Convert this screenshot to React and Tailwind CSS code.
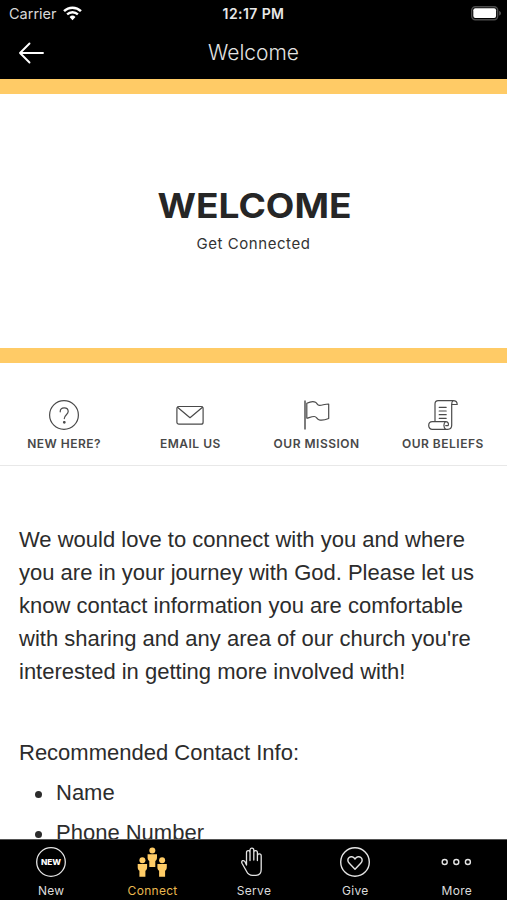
import React from "react";

const WifiIcon = () => (
  <svg width="19" height="15" viewBox="0 0 18 14" fill="none" stroke="white">
    <path d="M1 4.800a11.400 11.400 0 0 1 16 0" strokeWidth="2.400" />
    <path d="M3.900 7.900a7.300 7.300 0 0 1 10.200 0" strokeWidth="2.200" />
    <path d="M6.200 10.200a4 4 0 0 1 5.600 0L9 13.300z" fill="white" stroke="none" />
  </svg>
);

const BatteryIcon = () => (
  <svg width="31" height="15" viewBox="0 0 31 15">
    <rect x="0.7" y="0.7" width="26" height="13" rx="3.600" fill="none" stroke="#4c4c4c" strokeWidth="1.400" />
    <rect x="2.300" y="2.300" width="22.800" height="9.800" rx="2" fill="white" />
    <path d="M28.200 5v4.600c1-.4 1.700-1.200 1.700-2.300S29.200 5.400 28.200 5z" fill="#5c5c5c" />
  </svg>
);

const BackIcon = () => (
  <svg width="26" height="22" viewBox="0 0 26 22" fill="none" stroke="white" strokeWidth="1.900" strokeLinecap="round" strokeLinejoin="round">
    <path d="M11.500 1.500L2 11L11.500 20.500M2 11H25" />
  </svg>
);

const lineProps = {
  width: 32,
  height: 32,
  viewBox: "0 0 32 32",
  fill: "none",
  strokeLinecap: "round",
  strokeLinejoin: "round",
};

const QuestionIcon = () => (
  <svg {...lineProps} stroke="#4a4a4a" strokeWidth="1.200">
    <circle cx="16" cy="16" r="14.400" />
    <path d="M12.200 12.800c0-2.200 1.600-3.900 4-3.900s4 1.600 4 3.700c0 3-3.900 3.400-3.900 7" />
    <circle cx="16.300" cy="23.300" r="0.800" fill="#4a4a4a" />
  </svg>
);

const MailIcon = () => (
  <svg {...lineProps} stroke="#4a4a4a" strokeWidth="1.200">
    <rect x="2.900" y="7.500" width="26.200" height="17.700" rx="2" />
    <path d="M3.500 8.200L16 18.700L28.500 8.200" />
  </svg>
);

const FlagIcon = () => (
  <svg {...lineProps} stroke="#4a4a4a" strokeWidth="1.200">
    <path d="M4 1.600V30.400" stroke="#777" strokeWidth="1.900" strokeLinecap="butt" />
    <path d="M5.800 4.200C8.800 2.800 12 1.900 14.500 3.200C16.500 4.400 16 6.300 18.500 6.300C21.500 6.300 23.500 5 27.700 5V19.500C24 21 20 21.600 17.800 20.700C15.300 19.800 15.800 17.500 13.200 17.500C10.500 17.500 8 18.700 5.800 19.200z" />
  </svg>
);

const ScrollIcon = () => (
  <svg {...lineProps} stroke="#4a4a4a" strokeWidth="1.200">
    <path d="M8 22.600V5C8 3 9.300 1.700 11.200 1.700H26C28.800 1.700 30.200 3.300 30.200 5.500H24.700V26.300C24.700 28.800 23.200 30.300 20.700 30.300H5.300C3.200 30.300 1.700 28.700 1.700 26.500S3.200 22.600 5.300 22.600H18.500C16.300 24.500 16.400 28.500 18.700 30.300" />
    <path d="M18.500 22.600C21 22.600 22 24.500 21.200 26.600H18.700M26 1.700C24.800 2.300 24.700 3.800 24.700 5.500" />
    <path d="M12.200 8.300H19.200M12.200 12H19.200M12.200 15.700H19.200M12.200 19.300H19.200" />
  </svg>
);

const NewIcon = () => (
  <svg width="32" height="32" viewBox="0 0 32 32">
    <circle cx="16" cy="16" r="14.300" fill="none" stroke="#e4e4e4" strokeWidth="1.300" />
    <text x="5.900" y="18.900" textLength="20.200" lengthAdjust="spacingAndGlyphs" fill="white" fontFamily="Inter, sans-serif" fontWeight="800" fontSize="8">
      NEW
    </text>
  </svg>
);

const Person = ({ x, y }) => (
  <g transform={`translate(${x} ${y})`}>
    <circle cx="0" cy="3.400" r="3" />
    <path d="M-4.700 7.300H4.700V10.500C4.700 12.500 3.900 13.500 3 14V20H-3V14C-3.900 13.500-4.700 12.500-4.700 10.500z" />
  </g>
);

const PeopleIcon = () => (
  <svg width="32" height="32" viewBox="0 0 32 32" fill="#ffcc66">
    <Person x={16.300} y={1} />
    <Person x={6.400} y={10.800} />
    <Person x={26.100} y={10.800} />
  </svg>
);

const HandIcon = () => (
  <svg {...lineProps} stroke="#e4e4e4" strokeWidth="1.300">
    <path d="M9.500 19V6.800C9.500 4 13 4 13 6.800V14.500M13 6.800V4.300C13 1.500 16.800 1.500 16.800 4.300V14M16.800 6.500C16.800 3.900 20.400 3.900 20.400 6.500V14.500M20.400 9.800C20.400 7.200 24.200 7.200 24.200 9.800V23.500C24.200 27.500 22 29.300 19 29.300H15.500C12.500 29.300 10.800 27.900 9.500 25.200L5 17.300C3.900 14.600 6.800 13.600 8 15.800L9.500 19" />
  </svg>
);

const GiveIcon = () => (
  <svg {...lineProps} stroke="#e4e4e4" strokeWidth="1.400">
    <circle cx="16" cy="16" r="14.300" />
    <path d="M16 23.200L10.300 17.300C6 12.800 12.200 7.700 16 13C19.800 7.700 26 12.800 21.700 17.300z" />
  </svg>
);

const MoreIcon = () => (
  <svg {...lineProps} stroke="#e4e4e4" strokeWidth="1.400">
    <circle cx="4.700" cy="16" r="2.500" />
    <circle cx="16.300" cy="16" r="2.500" />
    <circle cx="27.900" cy="16" r="2.500" />
  </svg>
);

const links = [
  { label: "NEW HERE?", icon: QuestionIcon },
  { label: "EMAIL US", icon: MailIcon },
  { label: "OUR MISSION", icon: FlagIcon },
  { label: "OUR BELIEFS", icon: ScrollIcon },
];

const tabs = [
  { label: "New", icon: NewIcon },
  { label: "Connect", icon: PeopleIcon, active: true },
  { label: "Serve", icon: HandIcon },
  { label: "Give", icon: GiveIcon },
  { label: "More", icon: MoreIcon },
];

const paragraph = [
  "We would love to connect with you and where",
  "you are in your journey with God. Please let us",
  "know contact information you are comfortable",
  "with sharing and any area of our church you're",
  "interested in getting more involved with!",
];

const Header = () => (
  <header className="h-[79px] shrink-0 bg-black text-white">
    <div className="grid h-[27px] grid-cols-3 items-center font-['Inter',sans-serif]">
      <div className="flex items-center gap-[6px] pl-[9px]">
        <span className="text-[14.5px] text-[#d8d8d8]">Carrier</span>
        <WifiIcon />
      </div>
      <span className="text-center text-[14px] font-semibold tracking-[0.4px] text-[#e8e8e8]">12:17 PM</span>
      <div className="flex justify-end pr-[5px]">
        <BatteryIcon />
      </div>
    </div>
    <div className="grid h-[51px] grid-cols-3 items-center">
      <button type="button" className="pl-[18px]" aria-label="Back">
        <BackIcon />
      </button>
      <h1 className="text-center font-['Inter',sans-serif] text-[21px] font-light text-[#e4e4e4]">Welcome</h1>
    </div>
  </header>
);

const Banner = () => (
  <section className="flex h-[284px] shrink-0 flex-col items-center border-y-[15px] border-[#ffcb66] pt-[89px]">
    <svg width="200" height="44" viewBox="0 0 200 44" className="shrink-0">
      <text x="3.5" y="34.6" textLength="194" lengthAdjust="spacingAndGlyphs" fill="#262626" fontFamily="Inter, sans-serif" fontWeight="700" fontSize="34">
        WELCOME
      </text>
    </svg>
    <p className="mt-[7px] font-['Inter',sans-serif] text-[15px] leading-5 tracking-[0.55px] text-[#333]">Get Connected</p>
  </section>
);

export default function App() {
  return (
    <div className="flex h-[900px] w-[507px] flex-col overflow-hidden bg-white font-['Liberation_Sans',sans-serif]">
      <Header />
      <main className="flex min-h-0 flex-1 flex-col overflow-hidden">
        <Banner />
        <nav className="grid h-[103px] shrink-0 grid-cols-4 border-b border-[#e8e8e8] px-px pt-9">
          {links.map(({ label, icon: Icon }) => (
            <a key={label} className="flex flex-col items-center">
              <Icon />
              <span className="mt-[5px] whitespace-nowrap font-['Inter',sans-serif] text-xs leading-4 font-semibold tracking-[0.5px] text-[#484848]">
                {label}
              </span>
            </a>
          ))}
        </nav>
        <article className="px-[19px] pt-[57px] text-[22px] leading-[33px] text-[#2c2c2c]">
          <p>
            {paragraph.map((line) => (
              <span key={line} className="block whitespace-nowrap">{line}</span>
            ))}
          </p>
          <p className="mt-12">Recommended Contact Info:</p>
          <ul className="mt-[7px] flex flex-col gap-[7px]">
            {["Name", "Phone Number"].map((item) => (
              <li key={item} className="flex items-center">
                <span className="mt-1 mr-[14px] ml-[16px] h-[7px] w-[7px] rounded-full bg-[#2c2c2c]" />
                {item}
              </li>
            ))}
          </ul>
        </article>
      </main>
      <footer className="grid h-[61px] shrink-0 grid-cols-5 border-t border-[#555] bg-black pt-[6px]">
        {tabs.map(({ label, icon: Icon, active }) => (
          <a key={label} className="flex flex-col items-center">
            <Icon />
            <span className={`mt-[5px] pl-px font-['Inter',sans-serif] text-xs leading-4 tracking-[0.3px] ${active ? "text-[#e9b84f]" : "text-[#dcdcdc]"}`}>
              {label}
            </span>
          </a>
        ))}
      </footer>
    </div>
  );
}
